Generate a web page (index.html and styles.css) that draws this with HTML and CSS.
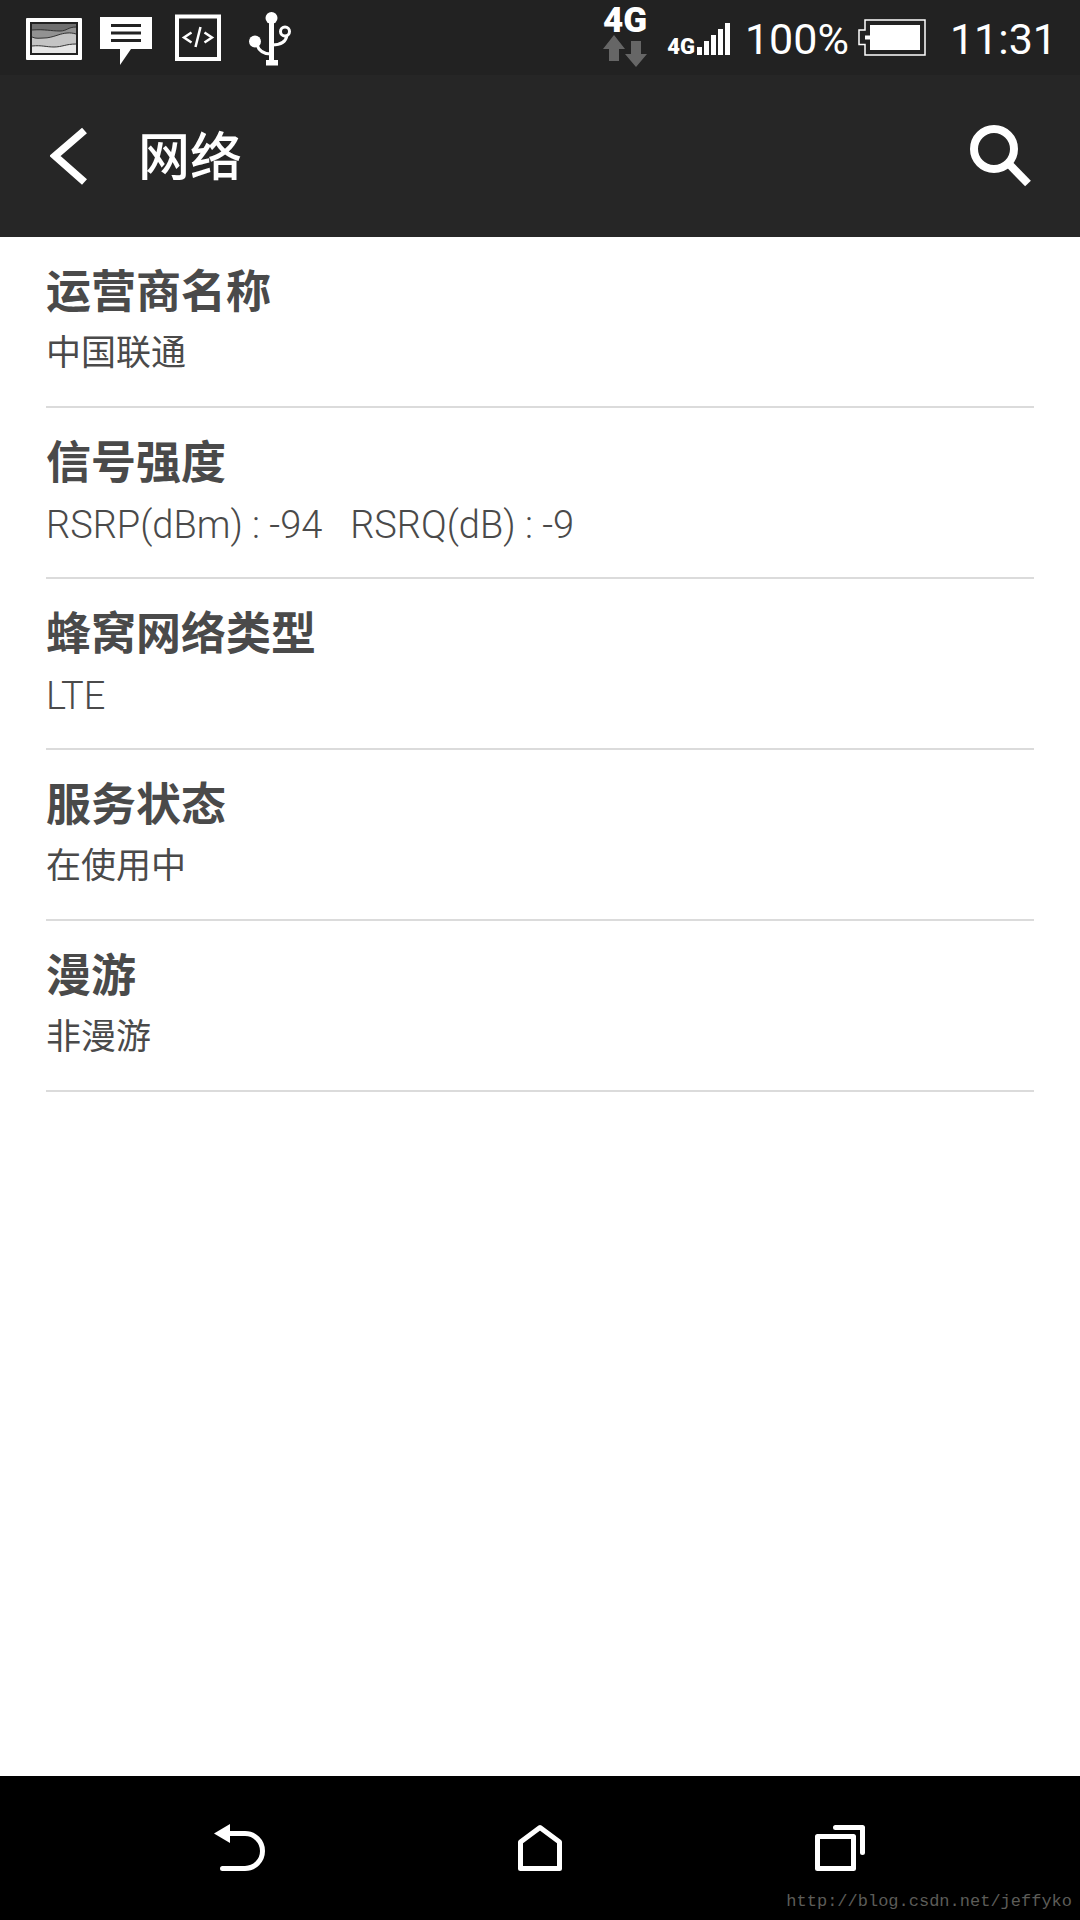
FILE: index.html
```html
<!DOCTYPE html>
<html lang="zh-CN">
<head>
<meta charset="utf-8">
<meta name="viewport" content="width=device-width">
<title>网络</title>
<link rel="stylesheet" href="styles.css">
</head>
<body>
<div class="status-bar">
  <div class="notifications">
    <svg width="56" height="75" viewBox="26 0 56 75" aria-hidden="true">
      <rect x="26" y="18" width="56" height="42" rx="1" fill="#fff"/>
      <rect x="30" y="22" width="48" height="33" fill="#222"/>
      <rect x="32" y="24" width="44" height="29" fill="#e6e6e6"/>
      <path d="M32 24h44v20c-10 0-14 3-22 3s-12-2-22-1z" fill="#c4c4c4"/>
      <path d="M32 24h44v10c-6-2-12-1-18 1s-10 3-14 3-8 1-12-1z" fill="#929292"/>
      <path d="M32 24h44v3c-8 0-9 4-16 4-10 0-14-1-28-1z" fill="#707070"/>
      <path d="M32 30c14-1 18 1 28 1 7 0 8-4 16-4M32 37c4 2 8 1 12 1s8-1 14-3 12-3 18-1M32 46c10-1 14 1 22 1s12-3 22-3" fill="none" stroke="#333"/>
    </svg>
    <svg width="57" height="75" viewBox="100 0 57 75" aria-hidden="true">
      <path d="M100 17h52v32h-21l-11 16V49h-20z" fill="#fff"/>
      <path d="M111 25.500h30M111 33h30M111 40.500h30" stroke="#222" stroke-width="3"/>
    </svg>
    <svg width="56" height="75" viewBox="175 0 56 75" aria-hidden="true">
      <rect x="177" y="16.500" width="42" height="42.500" fill="none" stroke="#fff" stroke-width="4"/>
      <path d="M191.500 32.500l-7.500 5 7.500 5M204.500 32.500l7.500 5-7.500 5M200.500 27l-5 20" fill="none" stroke="#fff" stroke-width="2.500"/>
    </svg>
    <svg width="42" height="75" viewBox="249 0 42 75" aria-hidden="true">
      <circle cx="271.500" cy="18" r="6" fill="#fff"/>
      <circle cx="255" cy="41.500" r="6" fill="#fff"/>
      <rect x="266" y="60" width="12" height="5.500" fill="#fff"/>
      <path d="M271.500 18v44" stroke="#fff" stroke-width="5"/>
      <circle cx="285" cy="31.500" r="4.500" fill="none" stroke="#fff" stroke-width="3"/>
      <path d="M257 45c2 6 6 9 14 9M272 45c8 0 14-3 15-10" fill="none" stroke="#fff" stroke-width="3"/>
    </svg>
  </div>
  <div class="indicators">
    <div class="data-link">
      <span class="data-type">4G</span>
      <svg width="44" height="33" viewBox="602 36 44 33" aria-hidden="true">
        <path d="M613 36l11 14h-6v12h-10V50h-6zM635 68l-11-13h6V42h10v13h6z" fill="#666"/>
      </svg>
    </div>
    <div class="signal">
      <span class="signal-type">4G</span>
      <svg width="34" height="32" viewBox="696 23 34 32" aria-hidden="true">
        <path d="M696 47h5v8h-5zM703 41h5v14h-5zM710 35h5v20h-5zM717 29h5v26h-5zM724 23h5v32h-5z" fill="#fff"/>
      </svg>
    </div>
    <span class="status-text">100%</span>
    <svg class="battery" width="68" height="75" viewBox="857 0 68 75" aria-hidden="true">
      <path d="M864 20h60v35h-60V44.500h-6V30h6z" fill="none" stroke="#fff" stroke-width="1.500"/>
      <path d="M869 25h50v25h-50V39.500h-5v-4h5z" fill="#fff"/>
    </svg>
    <time class="status-text" datetime="11:31">11:31</time>
  </div>
</div>
<header class="app-bar">
  <button class="icon-button" type="button" aria-label="返回">
    <svg width="38" height="58" viewBox="49 127 38 58" aria-hidden="true">
      <path d="M83.500 130.500L54 156l29.500 26" fill="none" stroke="#fff" stroke-width="7.500"/>
    </svg>
  </button>
  <h1 class="title">网络</h1>
  <button class="icon-button" type="button" aria-label="搜索">
    <svg width="62" height="62" viewBox="970 125 62 62" aria-hidden="true">
      <circle cx="994" cy="149" r="20" fill="none" stroke="#fff" stroke-width="8"/>
      <path d="M1009 164l19 19.500" stroke="#fff" stroke-width="8"/>
    </svg>
  </button>
</header>
<main class="content">
  <dl class="settings">
    <div class="row"><dt class="name">运营商名称</dt><dd class="value">中国联通</dd></div>
    <div class="row"><dt class="name">信号强度</dt><dd class="value value-latin">RSRP(dBm) : -94&nbsp;&nbsp; RSRQ(dB) : -9</dd></div>
    <div class="row"><dt class="name">蜂窝网络类型</dt><dd class="value value-latin">LTE</dd></div>
    <div class="row"><dt class="name">服务状态</dt><dd class="value">在使用中</dd></div>
    <div class="row"><dt class="name">漫游</dt><dd class="value">非漫游</dd></div>
  </dl>
</main>
<nav class="nav-bar">
  <button class="nav-button" type="button" aria-label="后退">
    <svg width="52" height="48" viewBox="215 1824 52 48" aria-hidden="true">
      <path d="M215 1833.500l16-9.500v19z" fill="#fff"/>
      <path d="M229 1833.500h17a17.500 17.500 0 0 1 0 35h-22.500" fill="none" stroke="#fff" stroke-width="5" stroke-linecap="round"/>
    </svg>
  </button>
  <button class="nav-button" type="button" aria-label="主屏幕">
    <svg width="44" height="48" viewBox="518 1824 44 48" aria-hidden="true">
      <path d="M520.500 1842l19.500-14.500 19.500 14.500v26.500h-39z" fill="none" stroke="#fff" stroke-width="5" stroke-linejoin="round"/>
    </svg>
  </button>
  <button class="nav-button" type="button" aria-label="最近任务">
    <svg width="50" height="48" viewBox="815 1824 50 48" aria-hidden="true">
      <path d="M817.500 1836.500h36v32h-36zM835.500 1827.500h27v25" fill="none" stroke="#fff" stroke-width="5" stroke-linecap="round" stroke-linejoin="round"/>
    </svg>
  </button>
  <span class="watermark">http://blog.csdn.net/jeffyko</span>
</nav>
</body>
</html>
```
FILE: styles.css
```css
* {
  box-sizing: border-box;
}

body {
  display: flex;
  flex-direction: column;
  min-height: 100vh;
  margin: 0;
  background: #fff;
  color: #4a4a4a;
  font-family: Roboto, "Noto Sans CJK SC", sans-serif;
}

svg {
  display: block;
  flex: none;
}

button {
  padding: 0;
  border: 0;
  background: none;
}

.status-bar {
  display: flex;
  justify-content: space-between;
  height: 75px;
  padding: 0 23px 0 26px;
  background: #222;
  color: #fff;
}

.notifications {
  display: flex;
  gap: 18px;
}

.indicators {
  display: flex;
  align-items: flex-start;
}

.data-link {
  display: flex;
  flex-direction: column;
  align-items: center;
  margin-right: 20px;
  padding-top: 6px;
}

.data-type {
  font-size: 35px;
  font-weight: 900;
  line-height: 29px;
}

.signal {
  display: flex;
  align-items: flex-end;
  gap: 2px;
  margin-right: 14px;
  padding-top: 23px;
}

.signal-type {
  font-size: 22px;
  font-weight: 900;
  line-height: 16px;
}

.status-text {
  font-size: 43px;
  line-height: 78px;
}

.battery {
  margin: 0 24px 0 9px;
}

.app-bar {
  display: flex;
  align-items: center;
  height: 162px;
  padding: 0 48px 0 50px;
  background: #262626;
  color: #fff;
}

.title {
  flex: 1;
  margin: 0 0 0 50px;
  padding-top: 6px;
  font-size: 52px;
  font-weight: 500;
  line-height: 76px;
}

.content {
  flex: 1;
}

.settings {
  margin: 0;
  padding: 0 46px;
}

.row {
  padding: 28px 0 27px;
  border-bottom: 2px solid #dbdbdb;
}

.name {
  font-size: 45px;
  font-weight: 700;
  line-height: 56px;
}

.value {
  margin: 0;
  padding-top: 8px;
  font-size: 35px;
  line-height: 50px;
}

.value-latin {
  font-size: 38px;
  font-weight: 300;
}

.nav-bar {
  position: relative;
  display: flex;
  justify-content: center;
  height: 144px;
  padding: 0 90px;
  background: #000;
}

.nav-button {
  display: flex;
  flex: 1;
  align-items: center;
  justify-content: center;
}

.watermark {
  position: absolute;
  right: 8px;
  bottom: 8px;
  color: #5c5c58;
  font-family: "Liberation Mono", monospace;
  font-size: 17px;
  line-height: 20px;
}
```
